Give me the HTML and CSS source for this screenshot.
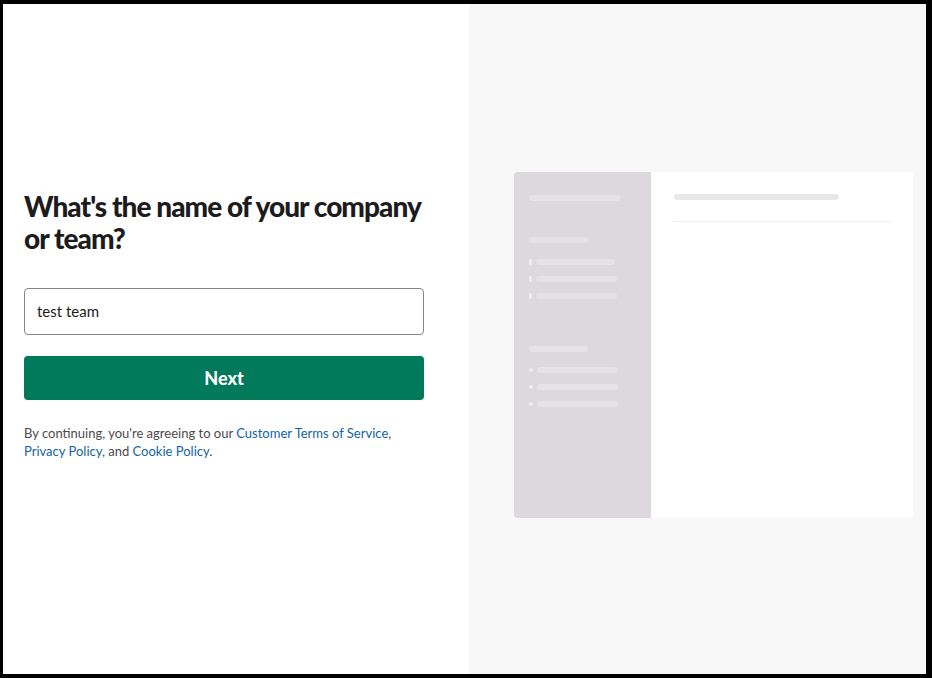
FILE: index.html
```html
<!DOCTYPE html>
<html>
<head>
<meta charset="utf-8">
<link rel="stylesheet" href="styles.css">
</head>
<body>
<div class="frame">
  <section class="left">
    <div class="form">
      <h1 class="title">What's the name of your company or team?</h1>
      <div class="input">test team</div>
      <button class="next">Next</button>
      <p class="legal">By continuing, you're agreeing to our <a href="#">Customer Terms of Service</a>, <a href="#">Privacy Policy</a>, and <a href="#">Cookie Policy</a>.</p>
    </div>
  </section>
  <section class="right">
    <div class="preview">
      <div class="side">
        <div class="bar w92 first"></div>
        <div class="bar w59 head"></div>
        <div class="item"><span class="tick"></span><div class="bar w80"></div></div>
        <div class="item"><span class="tick"></span><div class="bar w81"></div></div>
        <div class="item"><span class="tick"></span><div class="bar w81"></div></div>
        <div class="bar w59 head2"></div>
        <div class="item"><span class="dot"></span><div class="bar w81"></div></div>
        <div class="item"><span class="dot"></span><div class="bar w81"></div></div>
        <div class="item"><span class="dot"></span><div class="bar w81"></div></div>
      </div>
      <div class="main">
        <div class="mbar"></div>
        <div class="rule"></div>
      </div>
    </div>
  </section>
</div>
</body>
</html>
```
FILE: styles.css
```css
* { box-sizing: border-box; }
html, body { margin: 0; padding: 0; background: #000; }
body { font-family: Lato, "Noto Sans", sans-serif; }
.frame {
  margin: 4px 6px 4px 3px;
  height: 670px;
  display: grid;
  grid-template-columns: 466px 1fr;
}
.left { background: #fff; padding: 186px 0 0 21px; }
.form { width: 400px; }
.title {
  margin: 0;
  font-size: 28px;
  line-height: 32px;
  font-weight: 900;
  color: #1d1c1d;
  letter-spacing: -0.95px;
}
.input {
  margin-top: 34px;
  height: 47px;
  border: 1px solid #868686;
  border-radius: 4px;
  padding: 0 12px;
  font-size: 15px;
  line-height: 45px;
  color: #1d1c1d;
}
.next {
  display: block;
  width: 100%;
  margin-top: 21px;
  height: 44px;
  border: 0;
  border-radius: 4px;
  background: #007a5a;
  color: #fff;
  font-family: Lato, sans-serif;
  font-weight: 900;
  font-size: 18px;
}
.legal {
  margin: 24px 0 0;
  font-size: 13px;
  line-height: 18px;
  color: #4d4a4d;
}
.legal a { color: #1264a3; text-decoration: none; }
.right { background: #f8f8f8; padding: 168px 0 0 45px; }
.preview {
  width: 399px;
  height: 346px;
  display: flex;
  background: #fff;
  border-radius: 4px;
  overflow: hidden;
}
.side {
  width: 137px;
  background: #ddd8de;
  padding: 23px 0 0 15px;
  display: flex;
  flex-direction: column;
}
.bar { height: 6px; border-radius: 3px; background: #e5e1e6; }
.w92 { width: 92px; }
.w59 { width: 59px; }
.w80 { width: 79px; }
.w81 { width: 81px; }
.head { margin-top: 36px; margin-bottom: 10px; }
.head2 { margin-top: 42px; margin-bottom: 9px; }
.item { display: flex; align-items: center; height: 17px; gap: 4px; }
.tick { width: 3px; height: 6px; border-radius: 1px; background: #eeebee; }
.dot { width: 4px; height: 4px; border-radius: 50%; background: #eeebee; }
.main { flex: 1; padding: 22px 21px 0 22px; }
.mbar { width: 165px; height: 6px; border-radius: 3px; background: #e8e8e8; margin-left: 1px; }
.rule { height: 1px; background: #f0f0f0; margin-top: 21px; }
```
